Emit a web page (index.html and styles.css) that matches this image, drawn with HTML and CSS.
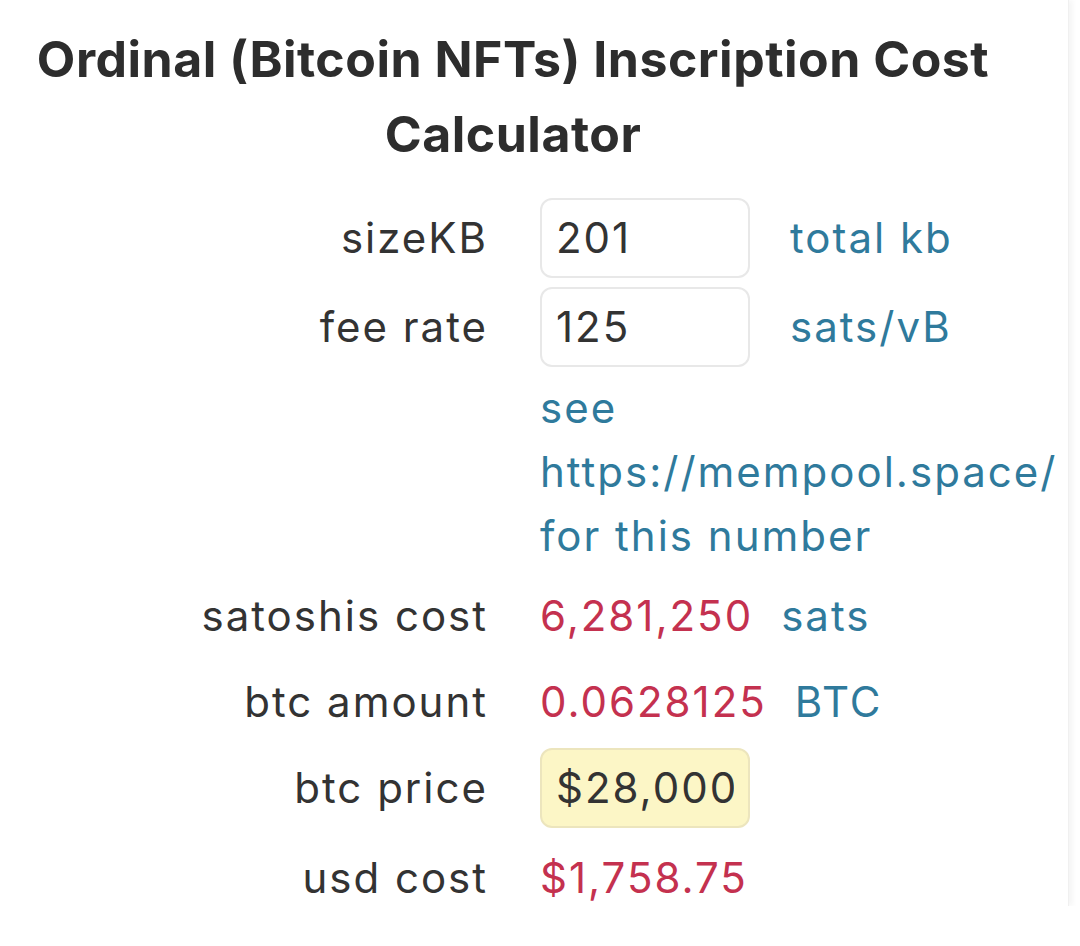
FILE: index.html
```html
<!DOCTYPE html>
<html lang="en">
<head>
<meta charset="utf-8">
<title>Ordinal (Bitcoin NFTs) Inscription Cost Calculator</title>
<link rel="stylesheet" href="styles.css">
</head>
<body>
<main class="panel">
  <h1 class="title">Ordinal (Bitcoin NFTs) Inscription Cost Calculator</h1>
  <div class="calc">
    <div class="label row-input">sizeKB</div>
    <div class="value row-input"><input class="field" type="text" value="201"><span class="unit">total kb</span></div>

    <div class="label row-input">fee rate</div>
    <div class="value row-input"><input class="field" type="text" value="125"><span class="unit">sats/vB</span></div>

    <div class="label row-note"></div>
    <div class="value row-note note">see https://mempool.space/ for this number</div>

    <div class="label row-text r-sats">satoshis cost</div>
    <div class="value row-text r-sats"><span class="num">6,281,250</span><span class="unit">sats</span></div>

    <div class="label row-text r-btc">btc amount</div>
    <div class="value row-text r-btc"><span class="num">0.0628125</span><span class="unit">BTC</span></div>

    <div class="label row-input r-price">btc price</div>
    <div class="value row-input r-price"><input class="field warn" type="text" value="$28,000"></div>

    <div class="label row-text r-usd">usd cost</div>
    <div class="value row-text r-usd"><span class="num">$1,758.75</span></div>
  </div>
</main>
</body>
</html>
```
FILE: styles.css
```css
html, body {
  margin: 0;
  padding: 0;
  background: #ffffff;
}
body {
  font-family: Inter, "Noto Sans", "Liberation Sans", sans-serif;
  color: #333333;
  font-size: 42px;
  letter-spacing: 2px;
}
.panel {
  width: 1069px;
  height: 906px;
  box-sizing: border-box;
  border-right: 1px solid #f0f0f0;
  box-shadow: 4px 0 5px rgba(0, 0, 0, 0.04);
  overflow: hidden;
}
.title {
  width: 1026px;
  margin: 0;
  padding-top: 22px;
  text-align: center;
  font-size: 50px;
  line-height: 75px;
  font-weight: 700;
  color: #2d2d2d;
  letter-spacing: 0.5px;
}
.calc {
  display: grid;
  grid-template-columns: 486px 530px;
  column-gap: 54px;
  margin-top: 21px;
}
.label {
  text-align: right;
  display: flex;
  align-items: center;
  justify-content: flex-end;
  line-height: 64px;
  color: #333333;
  margin-right: -2px;
}
.value {
  display: flex;
  align-items: center;
  gap: 28px;
  line-height: 64px;
}
.row-input {
  padding: 5px 0;
  height: 79px;
}
.row-input .unit {
  margin-left: 12px;
}
.field {
  box-sizing: border-box;
  width: 210px;
  height: 80px;
  border: 2px solid #e8e8e8;
  border-radius: 12px;
  padding: 0 14px;
  font-family: inherit;
  font-size: 42px;
  letter-spacing: 2px;
  color: #333333;
  background: #ffffff;
  outline: none;
}
.field.warn {
  background: #fcf6c6;
  border-color: #ece5bd;
}
.unit {
  color: #2f7a9c;
}
.num {
  color: #c4314f;
}
.note {
  display: block;
  color: #2f7a9c;
  padding: 5px 0 11px;
}
.row-note.label {
  padding: 0;
}
.row-text {
  padding: 8px 0;
}
.r-sats {
  padding-top: 5px;
}
.r-btc {
  padding-top: 14px;
}
.r-price {
  padding-top: 6px;
}
.r-usd {
  padding-top: 14px;
}
```
